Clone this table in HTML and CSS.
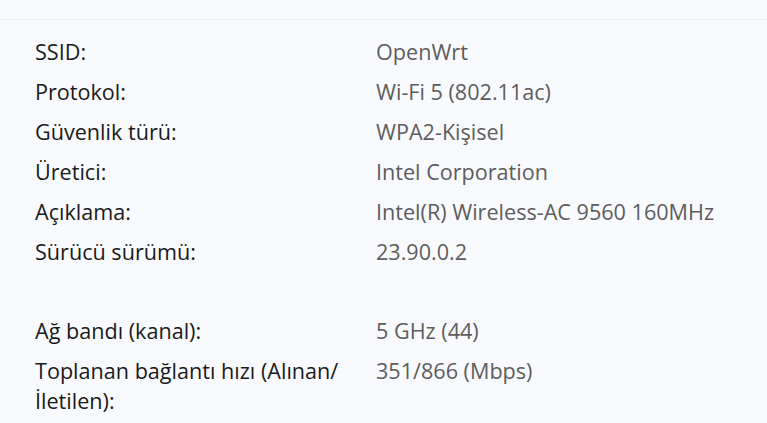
FILE: index.html
```html
<!DOCTYPE html>
<html lang="tr">
<head>
<meta charset="utf-8">
<link rel="stylesheet" href="styles.css">
</head>
<body>
<div class="topbar"></div>
<main class="content">
  <dl class="group">
    <dt>SSID:</dt><dd>OpenWrt</dd>
    <dt>Protokol:</dt><dd>Wi-Fi 5 (802.11ac)</dd>
    <dt>Güvenlik türü:</dt><dd>WPA2-Kişisel</dd>
    <dt>Üretici:</dt><dd>Intel Corporation</dd>
    <dt>Açıklama:</dt><dd>Intel(R) Wireless-AC 9560 160MHz</dd>
    <dt>Sürücü sürümü:</dt><dd>23.90.0.2</dd>
  </dl>
  <dl class="group">
    <dt>Ağ bandı (kanal):</dt><dd>5 GHz (44)</dd>
    <dt>Toplanan bağlantı hızı (Alınan/ İletilen):</dt><dd>351/866 (Mbps)</dd>
  </dl>
</main>
</body>
</html>
```
FILE: styles.css
```css
html, body {
  margin: 0;
  padding: 0;
  height: 100%;
  overflow: hidden;
  background: #f9fafd;
}
body {
  font-family: "Open Sans", "Noto Sans", sans-serif;
  font-size: 21.6px;
  line-height: 30px;
}
.topbar {
  height: 19px;
  border-bottom: 1px solid #eef1f6;
  background: #f9fafc;
}
.content {
  padding: 17px 0 0 35px;
  display: flex;
  flex-direction: column;
  gap: 49px;
}
.group {
  margin: 0;
  display: grid;
  grid-template-columns: 341px 1fr;
  row-gap: 10px;
}
.group dt {
  margin: 0;
  color: #1a1a1a;
  max-width: 320px;
}
.group dd {
  margin: 0;
  color: #5d5d5d;
}
```
